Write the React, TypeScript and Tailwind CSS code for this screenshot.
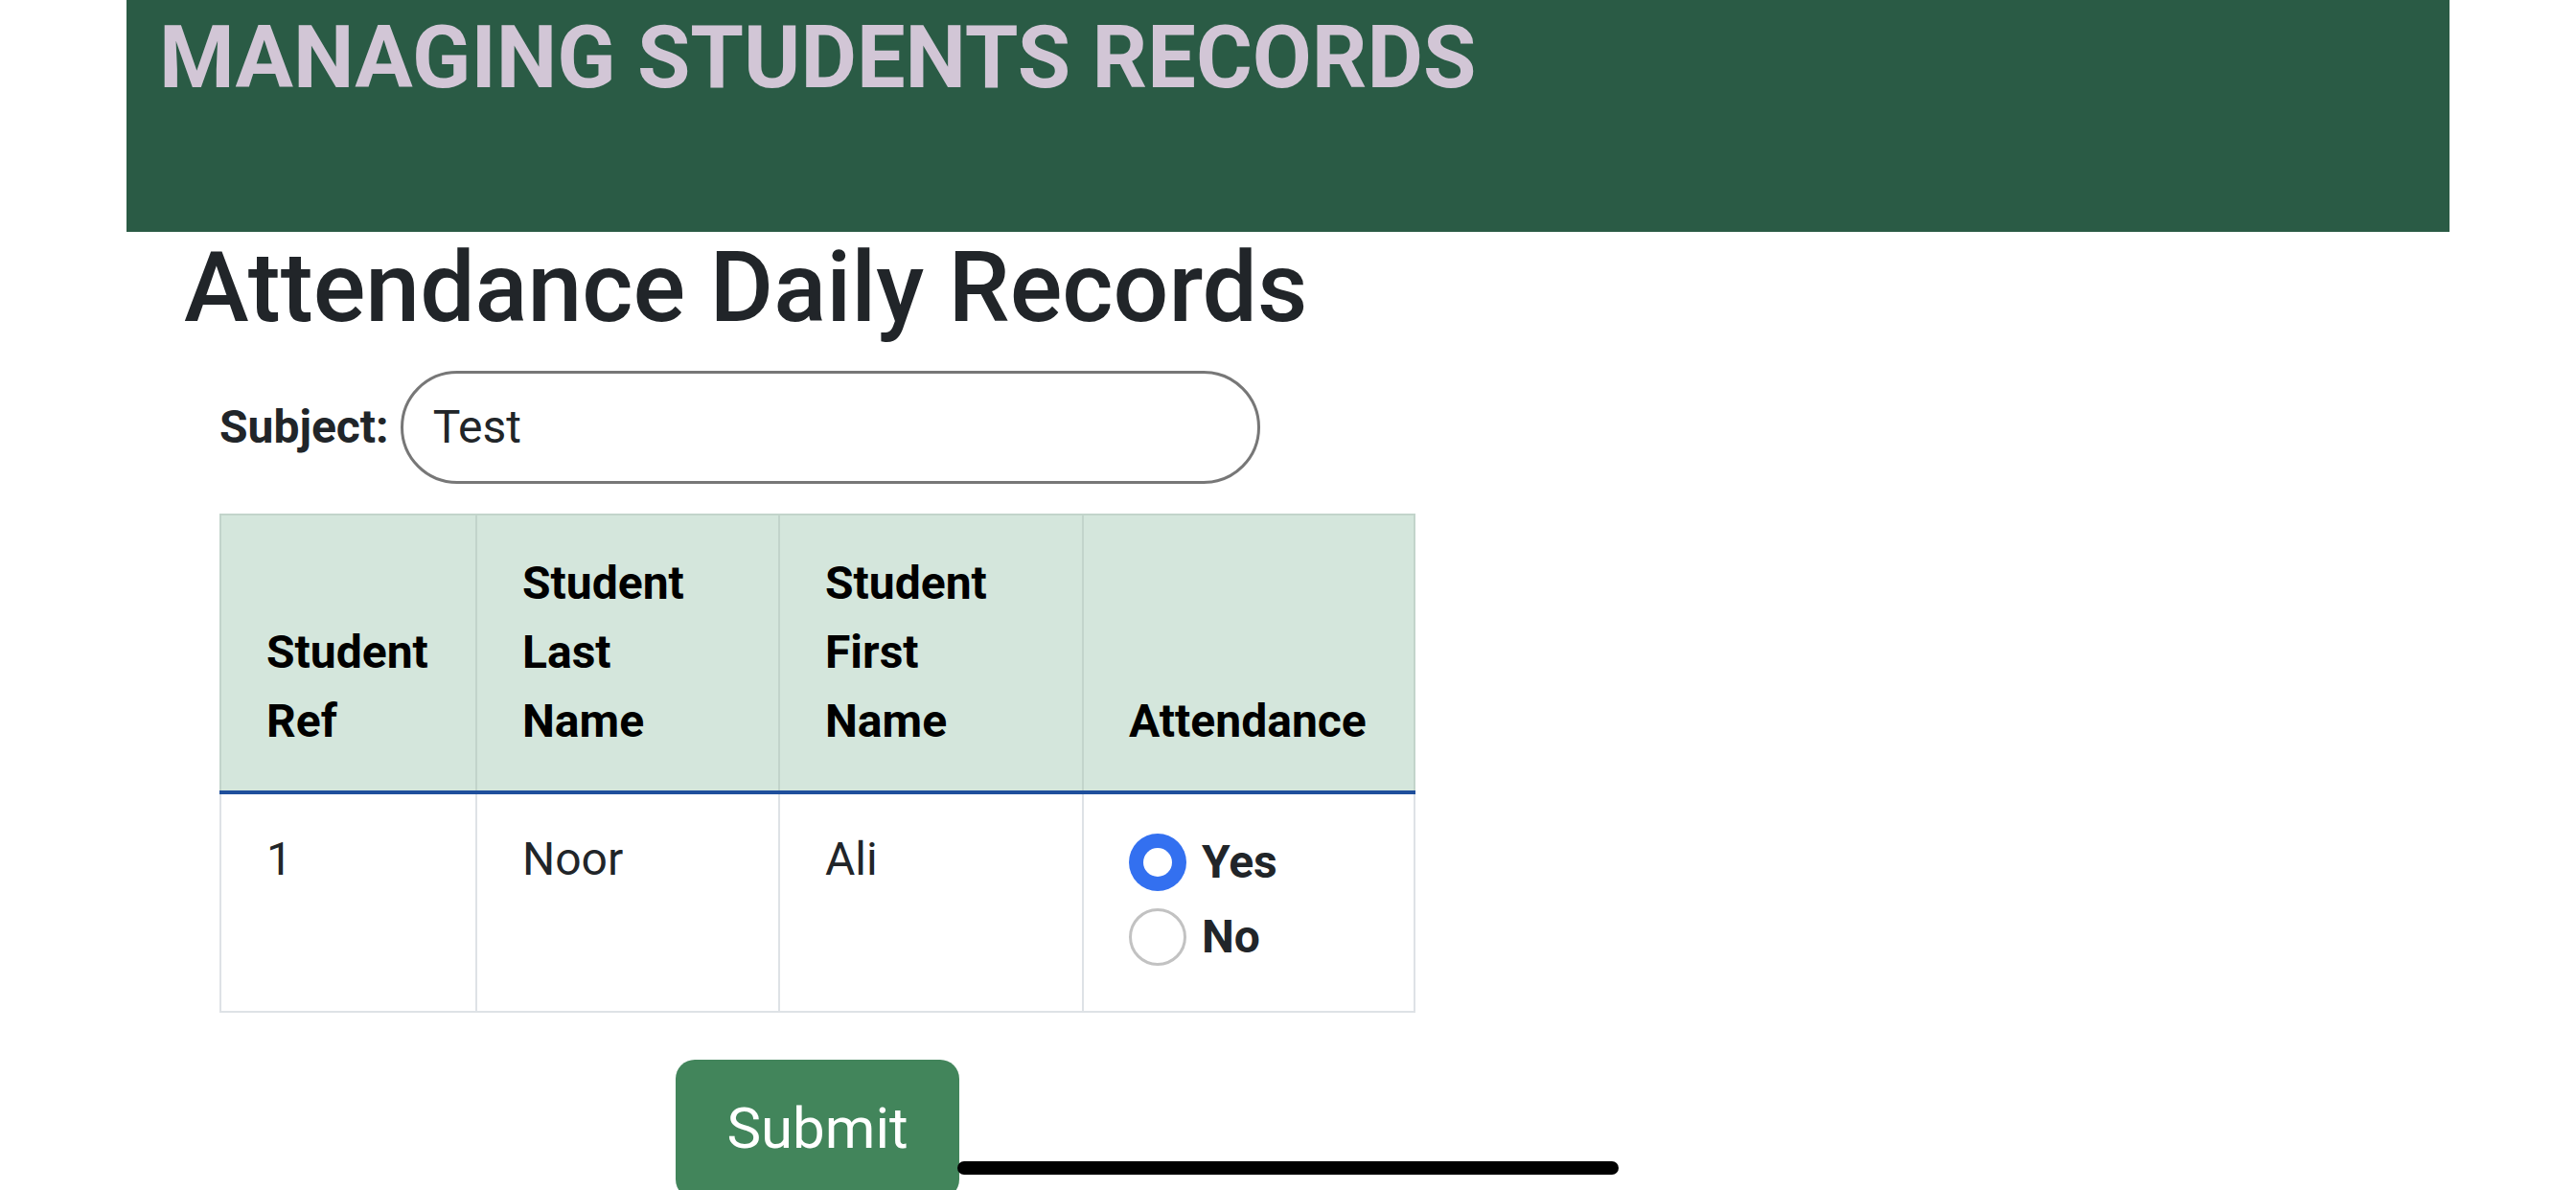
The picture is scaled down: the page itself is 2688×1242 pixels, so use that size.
import React from 'react'

const font = { fontFamily: 'Roboto, "Noto Sans", sans-serif' }

const headers = [
  { label: 'Student Ref', w: 'w-[267px]' },
  { label: 'Student Last Name', w: 'w-[316px]' },
  { label: 'Student First Name', w: 'w-[317px]' },
  { label: 'Attendance', w: 'w-[346px]' },
]

const Radio = ({ checked, label }: { checked: boolean; label: string }) => (
  <label className="flex items-center h-[78px] gap-[16px]">
    {checked ? (
      <span className="w-[60px] h-[60px] rounded-full bg-[#3370f0] flex items-center justify-center">
        <span className="w-[30px] h-[30px] rounded-full bg-white" />
      </span>
    ) : (
      <span className="w-[60px] h-[60px] rounded-full bg-white border-[3px] border-[#c2c2c2]" />
    )}
    <span className="font-bold text-[#212529] text-[48px] leading-[72px]">{label}</span>
  </label>
)

export default function App() {
  return (
    <div className="min-h-screen bg-white relative overflow-hidden" style={font}>
      <div className="mx-[132px]">
        <header className="bg-[#2a5b45] h-[242px] pl-[34px] pt-[16px]">
          <h1 className="text-[#d2c6d6] font-bold text-[90px] leading-[90px]">MANAGING STUDENTS RECORDS</h1>
        </header>

        <main className="px-[60px]">
          <h2 className="text-[#212529] font-medium text-[102px] leading-[116px]">Attendance Daily Records</h2>

          <div className="ml-[37px] w-fit">
            <div className="flex items-center gap-[12px] mt-[29px]">
              <span className="font-bold text-[48px] text-[#212529]">Subject:</span>
              <div className="w-[897px] h-[118px] rounded-full border-[3px] border-[#777777] flex items-center pl-[31px] text-[48px] text-[#212529]">
                Test
              </div>
            </div>

            <table className="mt-[31px] border-collapse text-[48px] leading-[72px] text-[#212529]">
              <thead>
                <tr>
                  {headers.map((h) => (
                    <th
                      key={h.label}
                      className={`${h.w} bg-[#d4e6dc] border-2 border-[#c2d4cb] border-b-4 border-b-[#1f4f9c] align-bottom text-left font-bold text-black px-[47px] pt-[35px] pb-[36px]`}
                    >
                      {h.label}
                    </th>
                  ))}
                </tr>
              </thead>
              <tbody>
                <tr>
                  <td className="border-2 border-[#dee2e6] align-top px-[47px] pt-[32px]">1</td>
                  <td className="border-2 border-[#dee2e6] align-top px-[47px] pt-[32px]">Noor</td>
                  <td className="border-2 border-[#dee2e6] align-top px-[47px] pt-[32px]">Ali</td>
                  <td className="border-2 border-[#dee2e6] align-top px-[47px] pt-[32px] pb-[38px]">
                    <Radio checked label="Yes" />
                    <Radio checked={false} label="No" />
                  </td>
                </tr>
              </tbody>
            </table>

            <div className="flex justify-center mt-[49px]">
              <button className="bg-[#42855b] text-white text-[60px] leading-[90px] rounded-[20px] px-[53px] pt-[27px] pb-[28px]">
                Submit
              </button>
            </div>
          </div>
        </main>
      </div>

      <div className="absolute left-[999px] bottom-[25px] w-[690px] h-[14px] rounded-full bg-black" />
    </div>
  )
}
